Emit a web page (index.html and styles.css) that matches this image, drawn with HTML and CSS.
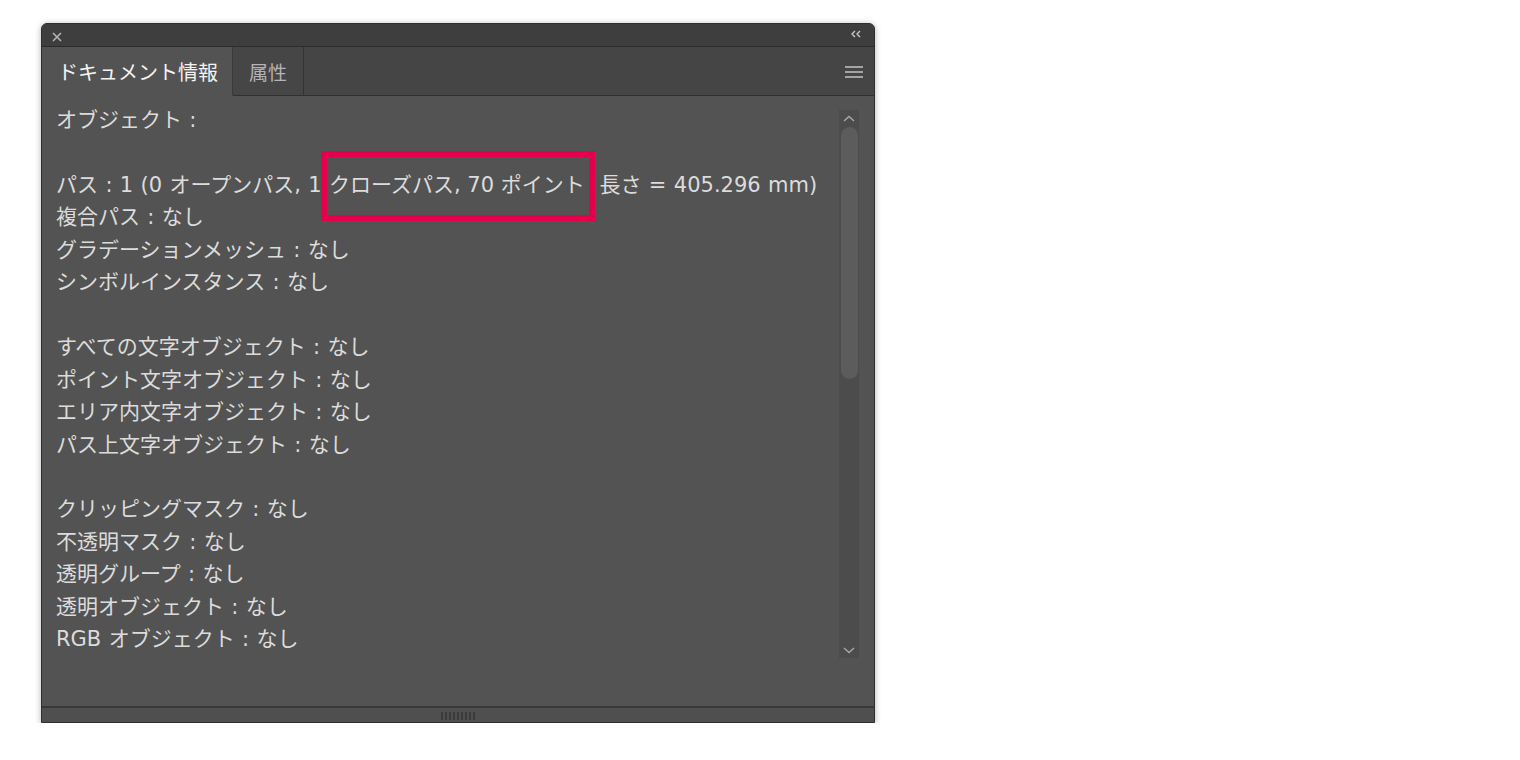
FILE: index.html
```html
<!DOCTYPE html>
<html lang="ja">
	<head>
		<meta charset="utf-8">
		<title>ドキュメント情報</title>
		<link rel="stylesheet" href="styles.css">
	</head>
	<body>
		<div id="panel">
			<div id="title-bar">
				<svg class="close-icon" width="10" height="10" viewBox="0 0 10 10"><path d="M1 1L9 9M9 1L1 9" stroke="#b4b4b4" stroke-width="1.6" fill="none"/></svg>
				<svg class="collapse-icon" width="12" height="8" viewBox="0 0 12 8"><path d="M5 1L2 4L5 7M10 1L7 4L10 7" stroke="#c8c8c8" stroke-width="1.4" fill="none"/></svg>
			</div>
			<div id="tab-row">
				<div class="tab active">ドキュメント情報</div>
				<div class="tab">属性</div>
				<div class="tab-fill"></div>
				<svg class="menu-icon" width="18" height="12" viewBox="0 0 18 12"><path d="M0 1H18M0 6H18M0 11H18" stroke="#c4c4c4" stroke-width="1.6" fill="none"/></svg>
			</div>
			<div id="content">
				<div id="info-text">
					<p>オブジェクト :</p>
					<p class="blank"></p>
					<p>パス : 1 (0 オープンパス, 1 <span class="mark">クローズパス, 70 ポイント</span>&nbsp; 長さ = 405.296 mm)</p>
					<p>複合パス : なし</p>
					<p>グラデーションメッシュ : なし</p>
					<p>シンボルインスタンス : なし</p>
					<p class="blank"></p>
					<p>すべての文字オブジェクト : なし</p>
					<p>ポイント文字オブジェクト : なし</p>
					<p>エリア内文字オブジェクト : なし</p>
					<p>パス上文字オブジェクト : なし</p>
					<p class="blank"></p>
					<p>クリッピングマスク : なし</p>
					<p>不透明マスク : なし</p>
					<p>透明グループ : なし</p>
					<p>透明オブジェクト : なし</p>
					<p>RGB オブジェクト : なし</p>
				</div>
				<div id="scrollbar">
					<svg class="arrow" width="12" height="7" viewBox="0 0 12 7"><path d="M1 6L6 1.5L11 6" stroke="#a8a8a8" stroke-width="1.4" fill="none"/></svg>
					<div class="thumb"></div>
					<div class="track-fill"></div>
					<svg class="arrow" width="12" height="7" viewBox="0 0 12 7"><path d="M1 1L6 5.5L11 1" stroke="#a8a8a8" stroke-width="1.4" fill="none"/></svg>
				</div>
			</div>
			<div id="bottom-bar">
				<div class="grip">
					<i></i><i></i><i></i><i></i><i></i><i></i><i></i><i></i><i></i>
				</div>
			</div>
		</div>
	</body>
</html>
```
FILE: styles.css
```css
* {
	box-sizing:border-box}
body {
	background-color:#ffffff;
	margin:0;
	padding:23px 0 0 41px}
#panel {
	background-color:#535353;
	border:1px solid #2f2f2f;
	border-radius:6px 6px 0 0;
	box-shadow:0 1px 6px rgba(0,0,0,0.3);
	display:flex;
	flex-direction:column;
	height:700px;
	overflow:hidden;
	width:834px}
#title-bar {
	align-items:center;
	background-color:#3e3e3e;
	border-bottom:1px solid #2c2c2c;
	display:flex;
	flex:none;
	height:23px;
	justify-content:space-between;
	padding:0 12px 0 10px}
.close-icon {
	margin-top:4px}
.collapse-icon {
	margin-top:-2px}
#tab-row {
	align-items:stretch;
	background-color:#454545;
	display:flex;
	flex:none;
	height:49px;
	position:relative}
.tab {
	align-items:center;
	background-color:#464646;
	border-bottom:1px solid #303030;
	border-right:1px solid #333333;
	color:#b4b4b4;
	display:flex;
	font-family:"Noto Sans CJK JP", sans-serif;
	font-size:19px;
	padding:0 16px}
.tab.active {
	background-color:#535353;
	border-bottom-color:#535353;
	border-right-color:#3a3a3a;
	color:#f4f4f4;
	font-size:20px;
	font-weight:400;
	padding:0 14px 0 16px;
	width:191px}
.tab-fill {
	border-bottom:1px solid #303030;
	flex:1}
.menu-icon {
	position:absolute;
	right:11px;
	top:19px}
#content {
	display:flex;
	flex:1;
	min-height:0}
#info-text {
	color:#dcdcdc;
	flex:1;
	font-family:"DejaVu Sans", "Noto Sans CJK JP", sans-serif;
	font-size:21px;
	line-height:32.45px;
	padding:8px 0 0 14px;
	word-spacing:0.7px}
#info-text p {
	margin:0;
	white-space:nowrap}
#info-text p.blank {
	height:32.45px}
.mark {
	border:6px solid #e6004c;
	margin:0 -10px 0 -8px;
	padding:16px 4px 18px 2px;
	word-spacing:0}
#scrollbar {
	align-items:center;
	background-color:#4c4c4c;
	display:flex;
	flex:none;
	flex-direction:column;
	height:548px;
	margin:14px 15px 0 0;
	padding:5px 0 4px;
	width:20px}
#scrollbar .arrow {
	flex:none}
.thumb {
	background-color:#5c5c5c;
	border-radius:9px;
	flex:none;
	height:252px;
	margin-top:5px;
	width:17px}
.track-fill {
	flex:1}
#bottom-bar {
	align-items:center;
	background-color:#4f4f4f;
	border-top:2px solid #383838;
	display:flex;
	flex:none;
	height:16px;
	justify-content:center}
.grip {
	display:flex;
	gap:2px;
	height:8px;
	margin-top:1px}
.grip i {
	background-color:#3a3a3a;
	display:block;
	width:2px}
```
